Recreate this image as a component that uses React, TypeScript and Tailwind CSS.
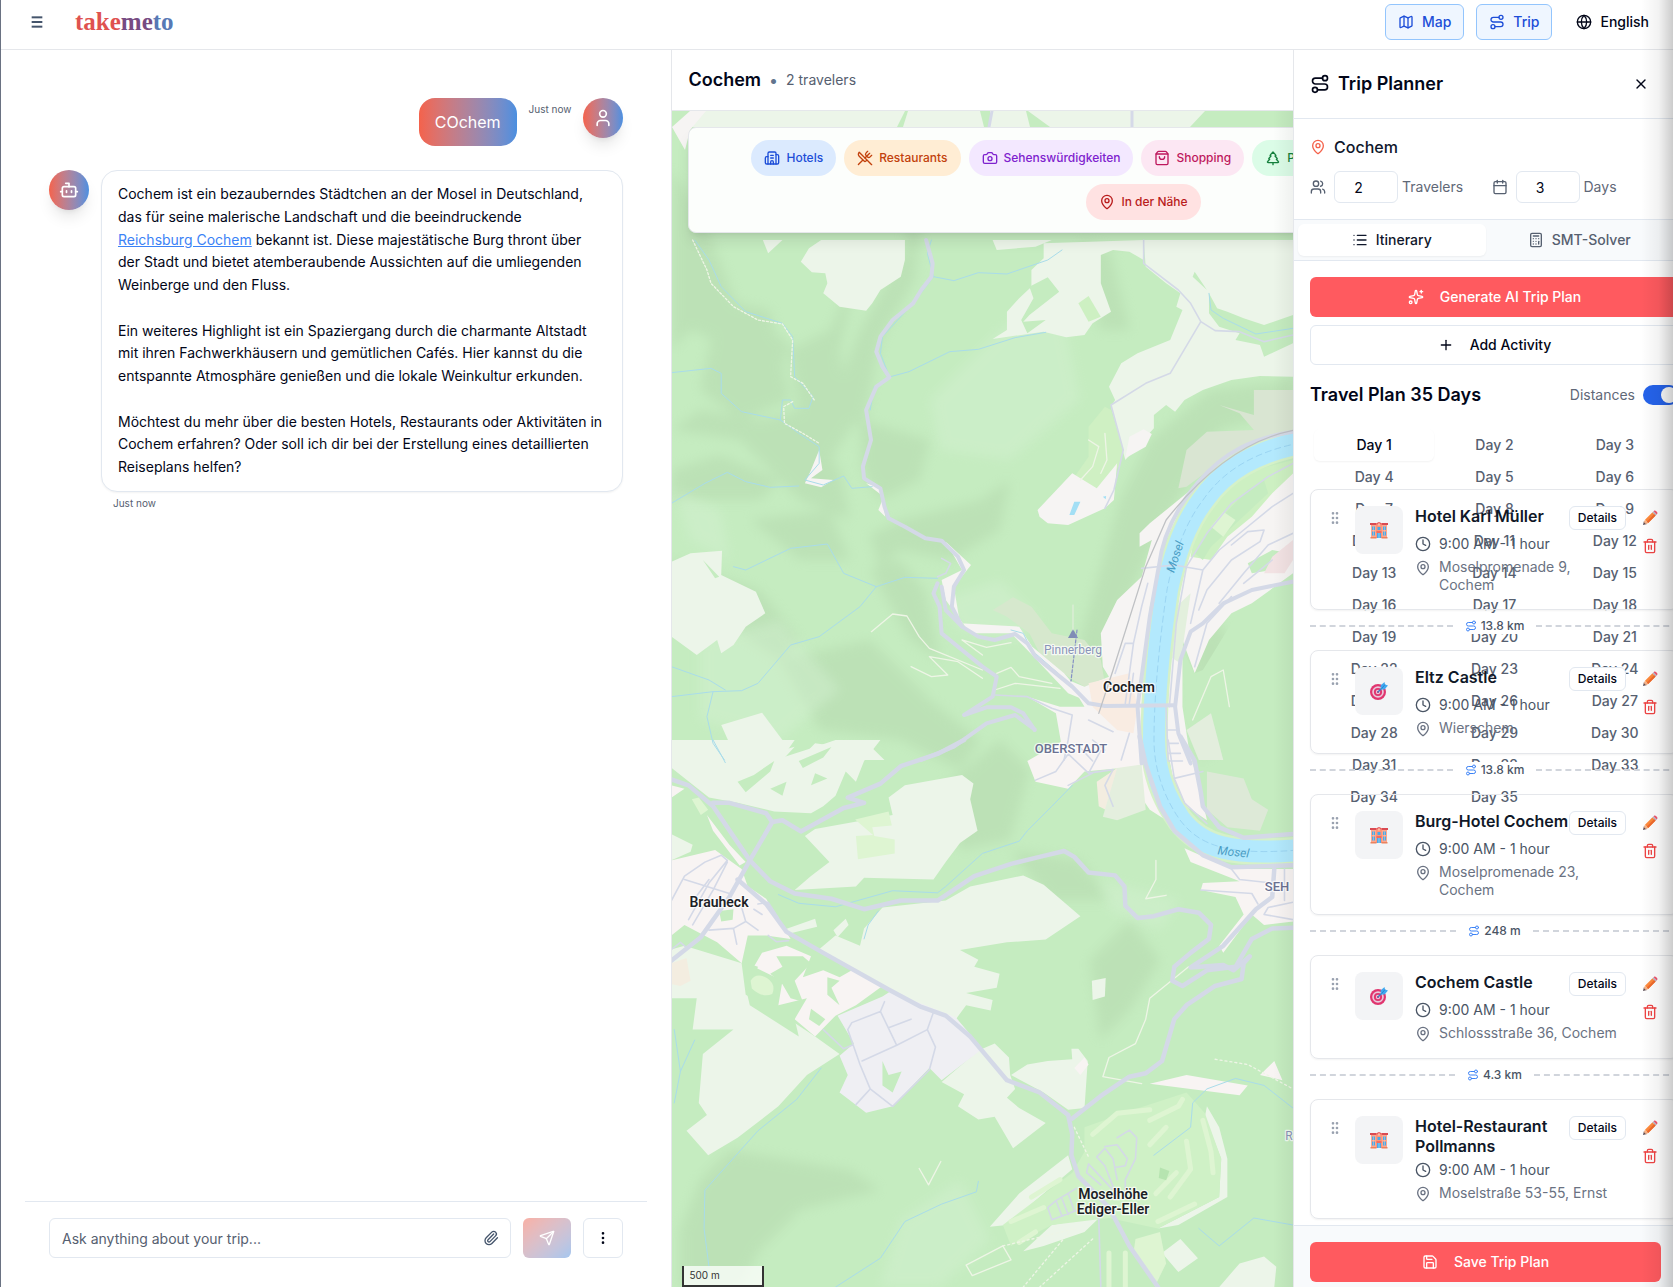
import React from "react";
import {
  Bot,
  Building2,
  Calculator,
  Calendar,
  Camera,
  Clock,
  EllipsisVertical,
  Globe,
  GripVertical,
  List,
  Map as MapIcon,
  MapPin,
  Menu,
  Paperclip,
  Plus,
  Route,
  Save,
  Send,
  ShoppingBag,
  Sparkles,
  Trash2,
  TreePine,
  User,
  Users,
  UtensilsCrossed,
  X,
} from "lucide-react";

type Activity = {
  name: string;
  kind: "hotel" | "sight";
  address: string;
  next?: string;
};

const activities: Activity[] = [
  { name: "Hotel Karl Müller", kind: "hotel", address: "Moselpromenade 9, Cochem", next: "13.8 km" },
  { name: "Eltz Castle", kind: "sight", address: "Wierschem", next: "13.8 km" },
  { name: "Burg-Hotel Cochem", kind: "hotel", address: "Moselpromenade 23, Cochem", next: "248 m" },
  { name: "Cochem Castle", kind: "sight", address: "Schlossstraße 36, Cochem", next: "4.3 km" },
  { name: "Hotel-Restaurant Pollmanns", kind: "hotel", address: "Moselstraße 53-55, Ernst" },
];

const days = Array.from({ length: 35 }, (_, i) => i + 1);

function Header() {
  return (
    <header className="flex shrink-0 items-center justify-between border-b border-gray-200 bg-white pt-1 pr-3 pb-[9px] pl-7">
      <div className="flex items-center">
        <button aria-label="Menu" className="text-slate-600">
          <Menu size={16} strokeWidth={3} strokeLinecap="butt" />
        </button>
        <a
          href="#"
          className="ml-[30px] font-['Liberation_Serif',serif] text-[25px] leading-8 font-bold"
        >
          <span className="text-[#df524f]">take</span>
          <span className="text-[#774b82]">me</span>
          <span className="text-[#5779b5]">to</span>
        </a>
      </div>
      <div className="flex items-center gap-3 text-sm font-medium">
        <button className="flex h-9 items-center gap-2 rounded-md border border-[#93c5fd] bg-blue-50 px-3 text-[#1d4ed8]">
          <MapIcon size={16} />
          Map
        </button>
        <button className="flex h-9 items-center gap-2 rounded-md border border-[#93c5fd] bg-blue-50 px-3 text-[#1d4ed8]">
          <Route size={16} />
          Trip
        </button>
        <button className="flex h-9 items-center gap-2 px-3 text-slate-950">
          <Globe size={16} />
          English
        </button>
      </div>
    </header>
  );
}

function Avatar({ children }: { children: React.ReactNode }) {
  return (
    <div className="flex size-10 shrink-0 items-center justify-center rounded-full bg-linear-to-r from-[#f4624b] to-[#4a8fe0] text-white shadow-lg">
      {children}
    </div>
  );
}

function Chat() {
  return (
    <section className="flex w-[40.1%] shrink-0 flex-col">
      <div className="flex flex-1 flex-col gap-6 px-12 pt-12">
        <div className="flex items-start justify-end gap-3">
          <div className="rounded-2xl bg-linear-to-r from-[#f4624b] to-[#4a8fe0] px-4 py-3 text-base text-white">COchem</div>
          <span className="pt-1 text-[10px] leading-[15px] text-[#566070]">Just now</span>
          <Avatar>
            <User size={20} />
          </Avatar>
        </div>
        <div className="flex items-start gap-3">
          <Avatar>
            <Bot size={20} />
          </Avatar>
          <div className="flex-1">
            <div className="rounded-2xl border border-slate-200 bg-white px-4 py-3 text-sm leading-relaxed text-slate-950 shadow-xs">
              <p>
                Cochem ist ein bezauberndes Städtchen an der Mosel in Deutschland, das für seine malerische Landschaft und
                die beeindruckende{" "}
                <a href="#" className="whitespace-nowrap text-[#3b82f6] underline">
                  Reichsburg Cochem
                </a>{" "}
                bekannt ist. Diese majestätische Burg thront über der Stadt und bietet atemberaubende Aussichten auf die
                umliegenden Weinberge und den Fluss.
              </p>
              <br />
              <p>
                Ein weiteres Highlight ist ein Spaziergang durch die charmante Altstadt mit ihren Fachwerkhäusern und
                gemütlichen Cafés. Hier kannst du die entspannte Atmosphäre genießen und die lokale Weinkultur erkunden.
              </p>
              <br />
              <p>
                Möchtest du mehr über die besten Hotels, Restaurants oder Aktivitäten in Cochem erfahren? Oder soll ich dir
                bei der Erstellung eines detaillierten Reiseplans helfen?
              </p>
            </div>
            <p className="mt-1 px-3 text-[10px] leading-[15px] text-[#566070]">Just now</p>
          </div>
        </div>
      </div>
      <form className="mx-6 flex gap-3 border-t border-slate-200 px-6 pt-4 pb-[29px]">
        <div className="relative flex-1">
          <input
            aria-label="Message"
            placeholder="Ask anything about your trip..."
            className="h-10 w-full rounded-md border border-slate-200 bg-white pr-10 pl-3 text-sm text-slate-950 placeholder:text-[#566070]"
          />
          <button type="button" aria-label="Attach file" className="absolute top-3 right-3 text-slate-600">
            <Paperclip size={16} />
          </button>
        </div>
        <button
          type="button"
          aria-label="Send"
          className="flex h-10 w-12 items-center justify-center rounded-md bg-linear-to-br from-[#f4624b] to-[#4a8fe0] text-white opacity-50"
        >
          <Send size={16} />
        </button>
        <button
          type="button"
          aria-label="More"
          className="flex size-10 items-center justify-center rounded-md border border-slate-200 text-slate-950"
        >
          <EllipsisVertical size={16} />
        </button>
      </form>
    </section>
  );
}

const NORTH = "matrix(0.40816 0 0 0.33333 660 240)";
const SOUTH = "matrix(0.40816 0 0 0.34892 660 740)";

function MapCanvas() {
  return (
    <svg
      className="absolute inset-0 size-full"
      viewBox="672 111 621 1176"
      preserveAspectRatio="xMinYMin slice"
      role="img"
      aria-label="Map of Cochem"
      strokeLinejoin="round"
      strokeLinecap="round"
    >
      <defs>
        <filter id="soft" x="-20%" y="-20%" width="140%" height="140%">
          <feGaussianBlur stdDeviation="6" />
        </filter>
      </defs>
      <rect x="672" y="111" width="700" height="1176" fill="#c5ecc0" />

      {/* hill shading */}
      <g fill="#a6c79d" opacity="0.28" filter="url(#soft)">
        <path d="M672,170 L700,210 735,300 790,345 770,400 740,350 690,330 672,350Z" />
        <path d="M790,350 L830,330 860,260 840,350 850,430 830,460 800,420Z" />
        <path d="M860,330 L905,250 910,180 922,220 915,280 880,340 865,420 845,430 840,380Z" />
        <path d="M672,430 L740,440 800,500 850,520 840,470 800,410 760,420 700,410Z" />
        <path d="M672,470 L720,455 780,480 760,500 700,500 672,500Z" />
        <path d="M720,300 L770,310 790,400 740,420 700,390Z" />
        <path d="M900,520 L980,500 1010,480 1000,530 950,560 900,550 880,570 870,535Z" />
        <path d="M870,570 L910,640 940,660 925,590 900,560Z" />
        <path d="M860,420 L930,440 920,480 880,500 862,470Z" />
        <path d="M1120,500 L1150,440 1210,390 1293,380 1293,410 1220,430 1160,530 1110,640 1090,690 1080,640Z" />
        <path d="M780,660 L870,640 930,700 980,740 960,770 900,740 820,730Z" />
        <path d="M672,560 L760,590 800,640 780,660 720,620 672,610Z" />
        <path d="M750,520 L830,510 850,560 800,560Z" />
        <path d="M940,790 L1000,740 1030,770 1010,840 960,850Z" />
        <path d="M1090,960 L1130,920 1160,960 1130,1010 1100,1040Z" />
        <path d="M1010,850 L1080,860 1110,900 1050,900Z" />
        <path d="M680,1230 L700,1180 730,1150 850,1170 880,1190 800,1210 760,1250 740,1287 680,1287Z" />
        <path d="M1190,640 L1220,620 1240,680 1230,740 1200,760Z" />
        <path d="M1080,240 L1110,250 1130,330 1100,330Z" />
      </g>
      <g fill="#d4f1d2" opacity="0.45" filter="url(#soft)">
        <path d="M930,400 L1000,330 1060,300 1080,400 1010,460 940,450Z" />
        <path d="M700,640 L780,620 840,690 780,740 700,720Z" />
        <path d="M940,600 L1000,580 1040,620 1020,640 960,630Z" />
        <path d="M900,1220 L960,1180 990,1240 940,1287 880,1287Z" />
        <path d="M675,490 L720,510 730,560 690,540Z" />
        <path d="M1100,880 L1180,900 1160,930 1110,910Z" />
      </g>

      {/* strip above the category bar */}
      <g fill="#ecf5e9">
        <path d="M695,111 H905 L897,127 H690Z" />
        <path d="M908,111 H980 L984,127 H903Z" />
        <path d="M1028,111 H1205 L1190,127 H1050Z" />
        <path d="M990,111 h36 l4,16 h-40Z" />
      </g>
      <path d="M672,127 L690,111 H706 L690,130 685,150Z" fill="#f6f4f3" />
      <path d="M992,111 L989,127 M1132,111 V127" stroke="#d5d9e8" strokeWidth="3" />

      {/* northern half */}
      <g transform={NORTH}>
        <g fill="#ecf5e9">
          <path d="M252,0 L300,0 265,40Z" />
          <path d="M395,0 L600,0 600,60 590,110 540,150 520,190 505,212 440,200 400,160 410,130 405,100 372,97 345,65 365,25Z" />
          <path d="M815,0 L960,0 920,20 825,30Z" />
          <path d="M940,10 L1185,0 1185,60 1150,35 1110,30 1080,45 1080,130 1105,215 1060,250 1040,285 995,292 940,275 815,297 850,270 850,215 880,175 910,140 910,90 940,55Z" />
          <path d="M1185,0 H1551 V225 L1480,255 1430,235 1390,215 1365,205 1345,160 1345,220 1370,260 1420,280 1410,300 1470,315 1480,350 1551,310 V410 L1470,408 1400,420 1330,450 1285,480 1262,515 1240,495 1210,525 1210,565 1140,660 1105,500 1115,480 1100,440 1130,370 1170,340 1250,300 1280,210 1265,200 1275,160 1240,130 1190,80Z" />
          <path d="M28,965 L75,940 152,932 150,1005 235,1055 258,1120 210,1160 180,1215 150,1240 140,1200 90,1245 28,1190Z" />
          <path d="M150,1455 L250,1418 300,1500 210,1520 170,1510Z" />
          <path d="M28,1520 L110,1560 H28Z M215,1560 L330,1520 300,1560Z M380,1510 L410,1515 390,1560 H340Z M500,1500 L550,1560 H450Z" />
        </g>
        <g fill="#c5ecc0">
          <path d="M950,112 L978,155 905,225 890,245 945,240 900,280 885,240 915,175 905,140Z" />
          <path d="M105,960 L145,1010 135,1015Z M1310,95 L1340,150 1305,110Z" />
        </g>
        <path d="M1025,190 L1050,168 1080,230 1050,245Z" fill="#cdf0c2" />
        <path d="M1050,560 L1090,500 1105,510 1135,630 1125,680 1070,745 1010,720 1050,650Z" fill="#cff0c3" />
        <path d="M925,810 L1010,700 1070,745 1120,670 1112,780 1090,805 1000,855 950,850 930,830Z M1140,655 L1150,590 1185,568 1205,582 1190,620Z" fill="#f6f4f3" />
        <path d="M1003,825 L1015,785 1030,785 1015,825Z M1085,770 L1093,768 1092,778Z" fill="#a3dff5" />
        <path d="M1270,745 L1290,630 1340,575 1455,570 1420,520 1370,495 1455,525 1455,450 1551,450 V570 L1400,640 1290,740Z" fill="#d9e5d2" />
        <path d="M815,1110 L865,1072 910,1100 960,1180 1040,1200 1080,1260 1090,1330 1040,1340 1000,1310 930,1240 905,1180 850,1130Z" fill="#d6e8cd" />
        <g fill="#f6f4f3">
          <path d="M390,630 L398,690 370,715 425,720 395,742 355,730 370,690Z" />
          <path d="M505,730 L540,742 552,830 535,810 548,770Z" />
          <path d="M700,905 L762,975 720,1040 735,1150 880,1160 912,1220 990,1300 1050,1385 1000,1360 900,1230 860,1180 760,1180 700,1080 690,1020 740,990Z" />
          <path d="M1310,740 L1200,850 1175,880 1175,920 1205,900 1180,1010 1120,1080 1080,1180 1085,1280 1100,1310 1040,1340 1000,1320 1040,1400 980,1400 900,1370 970,1420 990,1560 1190,1560 1180,1400 1200,1100 1240,900Z" />
          <path d="M1551,670 L1420,720 1340,800 1300,900 1265,1050 1240,1400 1240,1560 1300,1560 1280,1400 1280,1200 1310,1300 1345,1200 1400,1120 1450,1090 1551,1000Z" />
        </g>
        <path d="M1551,660 L1440,695 1350,785 1310,880 1300,950 1350,960 1390,890 1450,830 1500,760 1551,700Z" fill="#cdf0c2" />
        <path d="M1400,800 L1440,750 1480,720 1490,760 1420,840 1350,920 1330,960 1310,940 1340,880Z M1440,970 L1500,930 1540,940 1500,990 1450,1000Z" fill="#c5ecc0" />
        <path d="M1350,860 L1380,815 1410,840 1380,890Z" fill="#def5d2" />
        <path d="M1480,1000 L1500,950 1551,900 V960 L1530,1000Z" fill="#f2e2e3" />
        <path d="M1050,1330 L1150,1300 1170,1400 1160,1480 1120,1470 1060,1400Z" fill="#f9ece2" />
        <path d="M1265,1100 L1300,1060 1275,1270 1250,1250Z" fill="#e3f0dd" />
        <path d="M1280,1230 L1310,1300 1330,1290 1410,1130 1551,1020 V1560 H1340 L1290,1440Z" fill="#c5ecc0" />
        <path d="M1290,1470 L1350,1420 1380,1560 H1320Z" fill="#e3eedd" />
      </g>

      {/* southern half */}
      <g transform={SOUTH}>
        <g fill="#ecf5e9">
          <path d="M28,0 H330 L300,50 380,20 430,0 H540 L500,60 480,120 455,90 430,160 400,190 370,210 280,205 190,180 120,165 28,80Z" />
          <path d="M740,100 L768,125 760,170 778,260 735,295 700,350 670,400 500,395 480,420 330,430 370,390 415,350 355,275 380,255 570,215 560,165 600,130Z" />
          <path d="M890,388 L940,415 1030,505 945,572 850,580 735,602 780,630 770,650 832,670 825,710 750,725 815,745 810,775 750,760 725,800 640,765 390,600 430,560 490,590 500,540 545,480 700,460 760,420Z" />
          <path d="M28,270 L80,300 75,320 28,345Z M300,545 L380,512 385,535 315,555Z M425,545 L455,512 462,530 435,565Z" />
          <path d="M60,590 L200,640 210,730 290,780 380,850 440,900 360,960 290,1050 190,1140 118,1190 65,1120 115,1075 95,1040 105,900 180,830 80,830 90,740 28,740 V600Z" />
          <path d="M860,960 L900,930 950,920 1010,915 1008,885 1025,885 1048,920 1040,1055 1000,1060 940,1010Z" />
          <path d="M690,980 L780,890 820,870 855,910 858,960 870,1000 850,1025 880,1055 945,1098 865,1170 820,1080 780,1088 730,1050 745,1015Z" />
          <path d="M1058,690 L1092,682 1090,735 1060,745Z" />
          <path d="M1340,1050 L1370,1110 1390,1200 1390,1310 1270,1390 1220,1400 1370,1310 1375,1200 1335,1080Z" />
          <path d="M1000,1190 L1010,1230 930,1310 850,1390 808,1395 880,1300Z M1080,1365 L1040,1410 940,1450 890,1465 960,1390Z" />
          <path d="M1230,1470 L1275,1430 1318,1485 1270,1525Z M1370,1568 L1420,1500 1480,1480 1510,1510 1505,1568Z" />
        </g>
        <path d="M190,120 L230,100 280,60 270,90 210,150Z M270,140 L310,120 300,160Z M340,60 L420,20 400,50 350,80Z M380,95 L410,110 370,130Z" fill="#c5ecc0" />
        <g fill="#f8f4f3">
          <path d="M28,345 L135,315 200,370 215,420 260,455 320,570 260,560 215,560 200,640 140,580 60,530 28,560Z" />
          <path d="M115,215 L170,300 210,350 195,360 130,260Z M28,130 L60,140 28,165Z" />
          <path d="M250,610 L310,590 370,620 350,680 400,660 440,680 470,660 545,705 480,760 430,790 380,850 330,800 360,740 290,760 300,690 230,650Z" />
          <path d="M1200,985 L1290,960 1440,990 1420,1018 1300,1000Z M1470,960 L1505,920 1525,975Z M1015,940 L1040,910 1050,930 1030,960Z" />
          <path d="M900,60 L990,0 H1180 L1190,80 1240,230 1200,200 1130,80 1040,90 1000,140 920,120Z" />
          <path d="M1240,0 L1290,0 1325,150 1340,230 1290,190 1255,100Z" />
          <path d="M1285,310 L1400,370 1551,370 V520 L1480,530 1450,500 1380,610 1370,590 1430,500 1410,450 1325,430 1330,410 1420,405 1300,350Z" />
        </g>
        <path d="M1070,120 L1120,80 1125,150 1100,205 1075,190Z M28,640 L65,625 75,690 50,705 28,700Z" fill="#f3ede0" />
        <path d="M1120,80 L1180,70 1190,200 1120,230 1085,220Z" fill="#e4efde" />
        <path d="M1340,90 L1430,110 1450,170 1490,200 1470,260 1390,250 1340,200Z" fill="#dde9d7" />
        <g fill="#def5d2">
          <path d="M478,228 L560,205 568,245 520,250 525,275 575,285 575,325 485,342 480,275 522,272Z" />
          <path d="M222,690 Q235,665 262,682 Q285,700 275,728 Q250,740 225,712Z M78,170 L95,165 118,200 100,215Z" />
        </g>
        <path d="M565,720 L725,795 790,885 690,975 660,940 570,1050 505,1068 440,1010 460,960 440,905 475,870 435,790 545,735Z" fill="#efeff3" />
        <path d="M545,920 L560,960 592,950 570,1010 545,990Z M420,840 L440,830 470,870 445,880Z" fill="#c5ecc0" />
        <g fill="#c5ecc0">
          <path d="M145,490 L180,485 178,515 150,520Z M285,620 L300,650 270,670 300,700 320,740 350,750 330,690 370,640 350,620Z" />
          <path d="M370,770 L405,800 390,820 365,800Z M410,680 L440,690 420,710 440,760 410,730Z M215,640 L240,650 230,680Z" />
          <path d="M210,710 L330,800 340,850 220,760Z" />
        </g>
        {/* golf course */}
        <path d="M1040,1110 L1160,1060 1290,1010 1335,1070 1375,1200 1370,1310 1220,1400 1100,1370 960,1390 860,1450 840,1390 1010,1240 1040,1180Z" fill="#cff1c6" />
        <g stroke="#def5d2" strokeWidth="5" fill="none">
          <path vectorEffect="non-scaling-stroke" d="M1060,1130 L1120,1070 1200,1060 M1200,1090 L1270,1050 1280,1030 M1200,1160 L1240,1110" />
          <path vectorEffect="non-scaling-stroke" d="M1330,1090 L1350,1180 1355,1240 M1290,1150 L1300,1230 1250,1310 M1215,1300 L1265,1240" />
          <path vectorEffect="non-scaling-stroke" d="M910,1310 L980,1260 M860,1380 L940,1340 M880,1440 L920,1410 M1220,1380 L1310,1330" />
          <path vectorEffect="non-scaling-stroke" d="M1100,1470 V1568 M1140,1470 V1568" />
        </g>
        <path d="M1165,1430 L1225,1410 1240,1500 1215,1560 1160,1470Z" fill="#def5d2" />
        <path d="M1225,1225 L1248,1235 1240,1262 1222,1255Z" fill="#b6e4b0" />
      </g>

      {/* streams */}
      <g fill="none" stroke="#a9dcea" strokeWidth="1">
        <g transform={NORTH}>
          <path vectorEffect="non-scaling-stroke" d="M85,0 L120,60 150,140 210,215 300,250 325,290 330,410 375,470 365,505 330,505 320,480 300,480 295,540 340,580 390,620 390,670 355,720 400,735 450,708 470,745 520,740" />
          <path vectorEffect="non-scaling-stroke" d="M28,398 L125,385 150,400 150,460 200,515 295,540 M28,790 L110,730 165,697 210,725 270,742 340,738" />
          <path vectorEffect="non-scaling-stroke" d="M665,0 L655,40 670,110 720,122 780,98 850,102 950,60 985,30 M565,410 L610,395 710,335 780,328 870,293 945,277" />
          <path vectorEffect="non-scaling-stroke" d="M180,980 L210,990 320,925 410,912 450,1000 530,1040 600,1012 680,1015 M530,1040 L490,1100 390,1190 320,1215 240,1330 200,1352 130,1355 28,1370 M28,1280 L120,1320 160,1350 M130,1355 L115,1430 130,1510 158,1560" />
          <path vectorEffect="non-scaling-stroke" d="M1345,160 L1350,210 1380,235 1460,282 1551,265 M860,1170 L890,1180 910,1230 980,1305 M670,110 L620,190 545,290 540,340 562,410 525,440 515,510" />
        </g>
        <g transform={SOUTH}>
          <path vectorEffect="non-scaling-stroke" d="M130,0 L160,65 M1010,130 L960,190 900,260 880,290 790,325 700,420 680,438 570,432 430,478 340,468 290,443 M535,490 L510,530 500,570" />
          <path vectorEffect="non-scaling-stroke" d="M395,940 L335,1030 240,1120 110,1290 108,1400 120,1510 M780,1265 L775,1295 690,1330 600,1380 540,1485 430,1568 M1551,1055 L1480,990 1410,970 1340,1000 1305,1040 1300,1110 1210,1190 M1551,1390 L1455,1370 1370,1450 1320,1400 M35,830 L50,950 35,1040 M85,860 L50,950" />
        </g>
      </g>

      {/* tracks */}
      <g fill="none" stroke="#eef5e6" strokeWidth="1.3">
        <g transform={NORTH}>
          <path vectorEffect="non-scaling-stroke" strokeDasharray="2 2" d="M80,0 L115,90 125,130 180,200 240,240 300,252 325,300 320,410 350,430 378,480 M325,485 L303,500 305,550 350,580 390,610" />
          <path vectorEffect="non-scaling-stroke" d="M518,1175 L570,1122 605,1128 635,1190 660,1225 790,1290 M615,1280 L665,1310 705,1305 660,1250 730,1265 790,1315 M740,1200 L790,1245 M740,1200 L800,1222 860,1208 M825,1300 L860,1282 880,1310 960,1330 M820,1350 L870,1330 980,1345" />
          <path vectorEffect="non-scaling-stroke" d="M1050,600 L1075,620 1060,680 1030,720 M1090,580 L1095,660 1080,700 M1305,1440 L1350,1310 1380,1290 1395,1400" />
        </g>
        <g transform={SOUTH}>
          <path vectorEffect="non-scaling-stroke" d="M1295,650 L1200,740 1190,800 1165,870 1100,910 1085,965 1180,985 M635,1228 L658,1275 688,1208 M1215,345 V400 L1190,455 1240,445 M750,1505 L765,1535 860,1490 840,1450Z" />
          <path vectorEffect="non-scaling-stroke" strokeDasharray="2 3" d="M1360,915 L1440,930 1551,1000 M1015,1110 L1050,1195 M840,1450 L1020,1400 M1010,1400 L890,1568 M1060,1430 L930,1568" />
        </g>
      </g>

      {/* river */}
      <g fill="none">
        <path d="M1310,441 C1255,450 1223,471 1203,500 C1180,530 1171,570 1167,590 C1161,630 1154,690 1154,740 C1154,775 1168,803 1180,820 C1200,846 1228,857 1310,849" stroke="#d5f1c8" strokeWidth="27" />
        <path d="M1310,441 C1255,450 1223,471 1203,500 C1180,530 1171,570 1167,590 C1161,630 1154,690 1154,740 C1154,775 1168,803 1180,820 C1200,846 1228,857 1310,849" stroke="#b3e9fd" strokeWidth="22" />
        <path d="M1310,441 C1255,450 1223,471 1203,500 C1180,530 1171,570 1167,590 C1161,630 1154,690 1154,740 C1154,775 1168,803 1180,820 C1200,846 1228,857 1310,849" stroke="#9bd5f3" strokeWidth="1" strokeDasharray="6 4" />
      </g>

      {/* roads */}
      <g fill="none" stroke="#d4d9e7">
        <g transform={NORTH}>
          <g strokeWidth="4">
            <path vectorEffect="non-scaling-stroke" d="M652,0 L668,70 665,110 640,150 620,190 570,240 540,290 530,335 545,380 562,412 530,440 505,510 517,600 497,680 500,715 540,745 550,800 560,835 600,860 650,895 690,902 730,950 745,990 720,1040 715,1100 740,1160 780,1190 820,1200 870,1182 900,1210 920,1250 970,1300 1010,1340 1050,1390 1090,1398 1260,1396" />
            <path vectorEffect="non-scaling-stroke" d="M680,1030 L670,1060 685,1100 690,1180 740,1230 790,1280 825,1310 815,1370 745,1425 800,1402 860,1402 890,1420 918,1470 M640,1560 L720,1520 800,1450 870,1425 918,1468 M690,1040 L700,1110 740,1160" />
            <path vectorEffect="non-scaling-stroke" d="M1570,572 C1450,590 1380,640 1320,725 C1260,810 1230,900 1222,980 L1200,1130 1170,1400 1180,1570" />
            <path vectorEffect="non-scaling-stroke" d="M1570,1020 L1450,1050 1380,1090 1330,1150 1300,1175 1275,1260 1262,1400 1270,1480 1300,1570" />
          </g>
          <g strokeWidth="1.6">
            <path vectorEffect="non-scaling-stroke" d="M1185,0 V70 L1270,150 1300,190 1325,245 1250,400 1190,430 1105,495 1135,630 1112,750 1090,805 M1325,245 L1360,272 1420,275 1480,305 1551,285" />
            <path vectorEffect="non-scaling-stroke" d="M1551,670 L1490,710 1400,790 1340,880 1290,980 1265,1150 1248,1400 M1551,760 L1500,800 1430,870 1370,930 1330,990 1300,1150 M1400,915 L1440,875 1480,870 1470,905 1400,960 1340,1050 1320,1110 M1551,880 L1490,915 1430,1000 1370,1090 M1430,1030 L1500,960 M1180,985 L1260,975 1330,990" />
            <path vectorEffect="non-scaling-stroke" d="M1195,1030 L1180,1100 1160,1210 1140,1210 1115,1300 M1160,1210 L1140,1390 M820,1365 L900,1370 960,1405 1010,1425 M1010,1425 L1000,1500 990,1560 M1050,1440 L1110,1475 M1160,1300 L1150,1390 M1150,1480 L1130,1560 M1060,1500 L1090,1530 M1310,1280 L1340,1150 1400,1070" />
            <path vectorEffect="non-scaling-stroke" d="M1240,1400 L1245,1560 M1245,1470 H1265 M1245,1510 H1270 M1245,1540 H1275 M690,955 L712,970 700,1000 680,1010" />
          </g>
          <path vectorEffect="non-scaling-stroke" stroke="#bfc1c4" strokeWidth="1.3" d="M1570,567 C1440,590 1330,700 1240,840 L1190,980 1110,1290 1075,1420" />
        </g>
        <g transform={SOUTH}>
          <g strokeWidth="4.5">
            <path vectorEffect="non-scaling-stroke" d="M20,110 L70,130 130,190 220,345 270,405 330,440 420,455 500,485 590,460 680,460 770,390 860,355 930,335 990,318 1015,335 1050,380 1115,388 1138,420 1140,475 1170,510 1210,505 1270,485 1320,495 1350,530 1345,570 1300,610 1260,650 1255,690 1280,705 1340,660 1410,650 1450,570 1500,540 1560,538" />
            <path vectorEffect="non-scaling-stroke" d="M130,180 L170,180 260,210 275,235 220,345 170,450 100,565 20,640 M275,235 L300,230 345,262 450,195 500,180 460,165 540,125 590,75 680,40 745,0" />
            <path vectorEffect="non-scaling-stroke" d="M190,400 L260,470 310,550 400,610 560,715 640,765 700,790 760,850 850,975 930,1010 1000,1075 1010,1130 1008,1190 1025,1250 1100,1340 1150,1450 1220,1568" />
            <path vectorEffect="non-scaling-stroke" d="M1010,1085 L1080,1020 1150,965 1190,955 1230,920 1245,860 1260,800 1290,760 1360,705 1425,685 1430,640 1445,620 1405,660 1380,645 1300,652 1380,590 1460,485 1500,450 1505,370" />
            <path vectorEffect="non-scaling-stroke" d="M1175,-10 L1190,70 1225,190 1260,260 1330,330 1400,365 1570,358 M1275,-10 L1310,60 1325,150 1330,190 1370,250 1430,280 1570,268" />
          </g>
          <g strokeWidth="1.6">
            <path vectorEffect="non-scaling-stroke" d="M570,1050 L515,1000 490,930 460,830 470,810 540,778 550,750 M540,778 L580,875 495,920 M560,825 L615,800 M580,875 L655,830 670,780 M655,830 L675,880 660,945 570,1050 M400,830 L450,885 470,875 M515,1000 L480,1045" />
            <path vectorEffect="non-scaling-stroke" d="M28,460 L60,390 110,350 150,330 165,345 120,410 70,515 M60,400 L170,440 M120,400 L75,470 M165,350 L130,430 80,530 M120,545 L180,540 210,520 200,480 M180,540 L188,585 M210,520 L240,545 M240,470 L265,465 290,510 M230,485 L250,500 M265,560 L285,578 315,575 M28,600 L50,580 65,595" />
            <path vectorEffect="non-scaling-stroke" d="M920,115 L970,90 1000,40 1050,95 1110,85 1090,130 1110,190 M1050,95 L1080,30 M1020,10 L1060,60 M1000,130 L1060,95 M1245,0 L1260,110 1330,90 M1245,60 H1280 M1400,370 L1420,400 1500,410 M1530,370 V460 M1325,430 L1450,440 1465,470 M1480,500 L1490,480 1551,465 M1480,500 L1551,515 M1260,110 L1285,180 1340,240" />
            <path vectorEffect="non-scaling-stroke" d="M1110,1290 L1070,1240 1050,1215 1045,1240 1080,1275 M1110,1280 L1090,1220 1070,1195 1090,1170 1110,1200 1120,1260 M1090,1165 L1120,1160 1145,1200 1140,1220 1115,1225 M1120,1140 L1150,1118 1168,1140 1165,1200 1140,1260 1140,1310 M960,1375 L950,1340 970,1320 985,1365 M985,1315 L1000,1360 M1000,1300 L1015,1350 M960,1375 L1040,1340 M970,1320 L1020,1285" />
            <path vectorEffect="non-scaling-stroke" d="M1075,1370 L1080,1568" />
          </g>
        </g>
      </g>

      {/* peak marker and chair lift */}
      <path d="M1068,638 L1073,629 1078,638Z" fill="#7f8db5" />
      <path d="M1073,605 V630" stroke="#e6eee0" strokeWidth="1" />
      <path d="M1077,630 L1071,681" stroke="#8590c4" strokeWidth="1.2" strokeDasharray="3 2" />

      {/* place names */}
      <g fontFamily="Roboto, sans-serif" textAnchor="middle" paintOrder="stroke" stroke="#ffffff" strokeOpacity="0.75" strokeWidth="2.5">
        <g fontSize="14" fontWeight="600" fill="#1d1f26">
          <text x="1129" y="692">Cochem</text>
          <text x="719" y="907">Brauheck</text>
          <text x="1113" y="1199">Moselhöhe</text>
          <text x="1113" y="1214">Ediger-Eller</text>
        </g>
        <g fontSize="13" fontWeight="500" fill="#6b7192">
          <text x="1071" y="753">OBERSTADT</text>
          <text x="1277" y="891">SEH</text>
        </g>
        <g fontSize="12" fill="#8a94b8">
          <text x="1289" y="1140">R</text>
          <text x="1073" y="654">Pinnerberg</text>
        </g>
      </g>
      <g fontFamily="Roboto, sans-serif" fontSize="12" fontStyle="italic" textAnchor="middle" fill="#4a9dc4">
        <text transform="translate(1179 558) rotate(-72)">Mosel</text>
        <text transform="translate(1233 856) rotate(6)">Mosel</text>
      </g>
    </svg>
  );
}

const pill = "flex h-9 items-center gap-1.5 rounded-full px-[13px] text-xs font-medium whitespace-nowrap";

function MapPanel() {
  return (
    <section className="flex min-w-0 flex-1 flex-col border-l border-gray-200">
      <div className="flex shrink-0 items-center gap-2 border-b border-gray-200 px-4 py-4">
        <h2 className="text-lg leading-7 font-semibold text-slate-950">Cochem</h2>
        <span className="text-base text-slate-500">•</span>
        <span className="text-sm text-[#566070]">2 travelers</span>
      </div>
      <div className="relative flex-1 overflow-hidden">
        <MapCanvas />
        <div className="absolute top-4 left-4 flex w-[910px] flex-col gap-2 rounded-lg border border-gray-200 bg-white/95 p-3 shadow-lg">
          <div className="flex gap-2 pl-[50px]">
            <button className={`${pill} bg-blue-100 text-[#1d4ed8]`}>
              <Building2 size={16} />
              Hotels
            </button>
            <button className={`${pill} bg-orange-100 text-[#c2410c]`}>
              <UtensilsCrossed size={16} />
              Restaurants
            </button>
            <button className={`${pill} bg-purple-100 text-[#7e22ce]`}>
              <Camera size={16} />
              Sehenswürdigkeiten
            </button>
            <button className={`${pill} bg-pink-100 text-[#be185d]`}>
              <ShoppingBag size={16} />
              Shopping
            </button>
            <button className={`${pill} bg-green-100 text-[#15803d]`}>
              <TreePine size={16} />
              Parks
            </button>
          </div>
          <div className="flex justify-center">
            <button className={`${pill} bg-red-100 text-[#b91c1c]`}>
              <MapPin size={16} />
              In der Nähe
            </button>
          </div>
        </div>
        <div className="absolute bottom-0 left-2.5 h-[21px] w-[82px] border-2 border-t-0 border-[#333] bg-white/75 px-[5px] text-[10px] leading-[19px] text-[#333]">
          500 m
        </div>
        <div className="pointer-events-none absolute inset-y-0 right-0 w-5 bg-linear-to-l from-black/5 to-transparent" />
      </div>
    </section>
  );
}

function HotelEmoji() {
  return (
    <svg viewBox="0 0 18 18" className="size-[18px]" aria-hidden="true">
      <rect x="1" y="4" width="16" height="13" fill="#ffa78c" />
      <rect x="6" y="2" width="6" height="15" fill="#ff9478" />
      <rect x="0" y="2" width="6" height="2" fill="#d94a52" />
      <rect x="12" y="2" width="6" height="2" fill="#d94a52" />
      <path d="M5.5,3.5 Q9,-1.5 12.5,3.5Z" fill="#e5575c" />
      <circle cx="9" cy="3.5" r="1.3" fill="#ffb9a3" />
      <g fill="#4aa9e8">
        <rect x="2" y="5.5" width="3" height="3.5" />
        <rect x="2" y="10.5" width="3" height="4" />
        <rect x="13" y="5.5" width="3" height="3.5" />
        <rect x="13" y="10.5" width="3" height="4" />
        <rect x="7.5" y="6" width="3" height="3" />
        <rect x="7" y="12" width="4" height="5" />
      </g>
      <path d="M3.5,5.5 V14.5 M14.5,5.5 V14.5" stroke="#ffc4b0" strokeWidth="0.5" />
      <path d="M9,12 V17" stroke="#d7f0ff" strokeWidth="0.5" />
      <rect x="6.5" y="10.5" width="5" height="1" fill="#e0454e" />
      <rect x="0.5" y="16" width="6" height="1.5" fill="#e9825f" />
      <rect x="11.5" y="16" width="6" height="1.5" fill="#e9825f" />
    </svg>
  );
}

function TargetEmoji() {
  return (
    <svg viewBox="0 0 18 18" className="size-[18px]" aria-hidden="true">
      <circle cx="8" cy="10" r="8" fill="#e0356f" />
      <circle cx="8" cy="10" r="5.8" fill="#e9c9dc" />
      <circle cx="8" cy="10" r="4.1" fill="#e0356f" />
      <circle cx="8" cy="10" r="2.2" fill="#f0c4d8" />
      <circle cx="8" cy="10" r="1.1" fill="#d52a62" />
      <path d="M8,10 L13,5" stroke="#3c7fc4" strokeWidth="1.4" strokeLinecap="round" />
      <path d="M11,7.5 L10.5,3.5 14.5,0 15,2.5 18,3.5 14.5,7.5Z" fill="#3fa9f0" />
      <path d="M11.5,6.8 L15,2.5" stroke="#2478c8" strokeWidth="0.8" />
    </svg>
  );
}

function PencilEmoji() {
  return (
    <svg viewBox="0 0 16 16" className="size-4" aria-hidden="true">
      <path d="M1,15 L2,11 5,14Z" fill="#5b4a52" />
      <path d="M1.8,12 L3,9.8 6.2,13 4,14.2Z" fill="#f6b48a" />
      <path d="M3,9.8 L10.5,2.3 13.7,5.5 6.2,13Z" fill="#ff8a3c" />
      <path d="M4.8,11.6 L12.3,4.1 13.7,5.5 6.2,13Z" fill="#f06a2e" />
      <path d="M10.5,2.3 L11.6,1.2 14.8,4.4 13.7,5.5Z" fill="#b9b6c9" />
      <path d="M11.6,1.2 L12.4,0.6 Q13.2,0.2 14,1 L15,2 Q15.8,2.8 15.3,3.7 L14.8,4.4Z" fill="#f0566e" />
    </svg>
  );
}

function NumberField({ id, icon, value, label }: { id: string; icon: React.ReactNode; value: number; label: string }) {
  return (
    <div className="flex items-center">
      <span className="mr-2 text-[#566070]">{icon}</span>
      <input
        id={id}
        type="number"
        defaultValue={value}
        className="h-8 w-16 rounded-md border border-slate-200 px-3 text-center text-sm text-slate-950"
      />
      <label htmlFor={id} className="ml-1 text-sm text-[#5f6877]">
        {label}
      </label>
    </div>
  );
}

function ActivityCard({ activity }: { activity: Activity }) {
  return (
    <article className="relative flex rounded-lg border border-gray-200 p-4 shadow-xs">
      <GripVertical size={16} className="mt-1 shrink-0 text-gray-400" />
      <div className="ml-3 flex size-12 shrink-0 items-center justify-center rounded-lg bg-gray-100">
        {activity.kind === "hotel" ? <HotelEmoji /> : <TargetEmoji />}
      </div>
      <div className="ml-3 w-[211px] shrink-0">
        <div className="flex items-start justify-between">
          <h4 className="text-base leading-5 font-semibold text-gray-900">{activity.name}</h4>
          <button className="h-6 shrink-0 rounded-md border border-slate-200 bg-white px-2 text-xs font-medium text-slate-950">
            Details
          </button>
        </div>
        <p className="mt-1 flex items-center gap-2 text-sm text-gray-600">
          <Clock size={16} />
          9:00 AM - 1 hour
        </p>
        <p className="mt-1 flex items-start gap-2 text-sm leading-tight text-gray-500">
          <MapPin size={16} className="mt-0.5 shrink-0" />
          <span className={activity.address.startsWith("Moselpromenade") ? "max-w-[150px]" : ""}>{activity.address}</span>
        </p>
      </div>
      <div className="ml-3 flex w-8 flex-col items-center gap-1">
        <button aria-label={`Edit ${activity.name}`} className="flex h-6 items-center">
          <PencilEmoji />
        </button>
        <button aria-label={`Delete ${activity.name}`} className="flex h-6 items-center text-[#ef4444]">
          <Trash2 size={16} />
        </button>
      </div>
    </article>
  );
}

function Distance({ text }: { text: string }) {
  return (
    <div className="relative mt-2 mb-4 flex items-center">
      <div className="flex-1 border-t-2 border-dashed border-gray-300" />
      <div className="flex items-center gap-1 bg-white px-3 text-xs font-medium text-gray-600">
        <Route size={12} className="text-[#3b82f6]" />
        {text}
      </div>
      <div className="flex-1 border-t-2 border-dashed border-gray-300" />
    </div>
  );
}

function TripPlanner() {
  return (
    <aside className="-mr-1 flex w-96 shrink-0 flex-col border-l border-gray-200 bg-white">
      <div className="flex items-center justify-between border-b border-slate-200 p-4">
        <h2 className="flex items-center gap-2 text-lg font-semibold text-slate-950">
          <Route size={20} />
          Trip Planner
        </h2>
        <button aria-label="Close" className="flex h-9 w-10 items-center justify-center text-slate-950">
          <X size={16} />
        </button>
      </div>
      <div className="border-b border-slate-200 p-4">
        <div className="flex items-center gap-2 text-base font-medium text-slate-900">
          <MapPin size={16} className="text-[#f4624b]" />
          Cochem
        </div>
        <div className="mt-3 grid grid-cols-2 gap-3">
          <NumberField id="travelers" icon={<Users size={16} />} value={2} label="Travelers" />
          <NumberField id="days" icon={<Calendar size={16} />} value={3} label="Days" />
        </div>
      </div>
      <div role="tablist" className="grid grid-cols-2 border-b border-slate-200 bg-slate-50 p-1 text-sm font-medium">
        <button role="tab" aria-selected="true" className="flex h-8 items-center justify-center gap-2 rounded-md bg-white text-slate-900 shadow-xs">
          <List size={16} />
          Itinerary
        </button>
        <button role="tab" aria-selected="false" className="flex h-8 items-center justify-center gap-2 text-[#566070]">
          <Calculator size={16} />
          SMT-Solver
        </button>
      </div>
      <div className="min-h-0 flex-1 overflow-hidden p-4">
        <div className="min-w-[369px]">
          <button className="flex h-10 w-full items-center justify-center gap-4 rounded-md bg-[#ff5a5f] text-sm font-medium text-white">
            <Sparkles size={16} />
            Generate AI Trip Plan
          </button>
          <button className="mt-2 flex h-10 w-full items-center justify-center gap-4 rounded-md border border-slate-200 text-sm font-medium text-slate-950">
            <Plus size={16} />
            Add Activity
          </button>
          <div className="mt-4 flex items-center justify-between">
            <h3 className="text-lg leading-7 font-semibold text-slate-950">Travel Plan 35 Days</h3>
            <label className="flex items-center gap-2 text-sm text-[#5f6877]">
              Distances
              <input
                type="checkbox"
                role="switch"
                defaultChecked
                className="h-5 w-9 appearance-none rounded-full bg-[#2563eb] p-0.5 before:ml-4 before:block before:size-4 before:rounded-full before:bg-white"
              />
            </label>
          </div>
          <div role="tablist" className="mt-4 grid h-10 grid-cols-3 content-start p-1 text-sm font-medium">
            {days.map((day) => (
              <button
                key={day}
                role="tab"
                aria-selected={day === 1}
                className={day === 1 ? "h-8 rounded-md bg-white text-slate-950 shadow-xs" : "h-8 text-[#566070]"}
              >
                Day {day}
              </button>
            ))}
          </div>
          <div className="mt-6">
            {activities.map((activity) => (
              <React.Fragment key={activity.name}>
                <ActivityCard activity={activity} />
                {activity.next && <Distance text={activity.next} />}
              </React.Fragment>
            ))}
          </div>
        </div>
      </div>
      <div className="relative border-t border-slate-200 bg-slate-50 px-4 pt-4 pb-[5px]">
        <button className="flex h-10 w-full items-center justify-center gap-4 rounded-md bg-[#ff5a5f] text-sm font-medium text-white">
          <Save size={16} />
          Save Trip Plan
        </button>
      </div>
    </aside>
  );
}

export default function App() {
  return (
    <div className="relative flex h-screen flex-col overflow-hidden border-l border-gray-500 bg-white font-['Inter',sans-serif] text-slate-950">
      <Header />
      <main className="flex min-h-0 flex-1">
        <Chat />
        <MapPanel />
        <TripPlanner />
      </main>
      <div className="pointer-events-none absolute inset-y-0 right-0 w-8 bg-linear-to-l from-black/20 via-black/5 via-45% to-transparent" />
    </div>
  );
}
